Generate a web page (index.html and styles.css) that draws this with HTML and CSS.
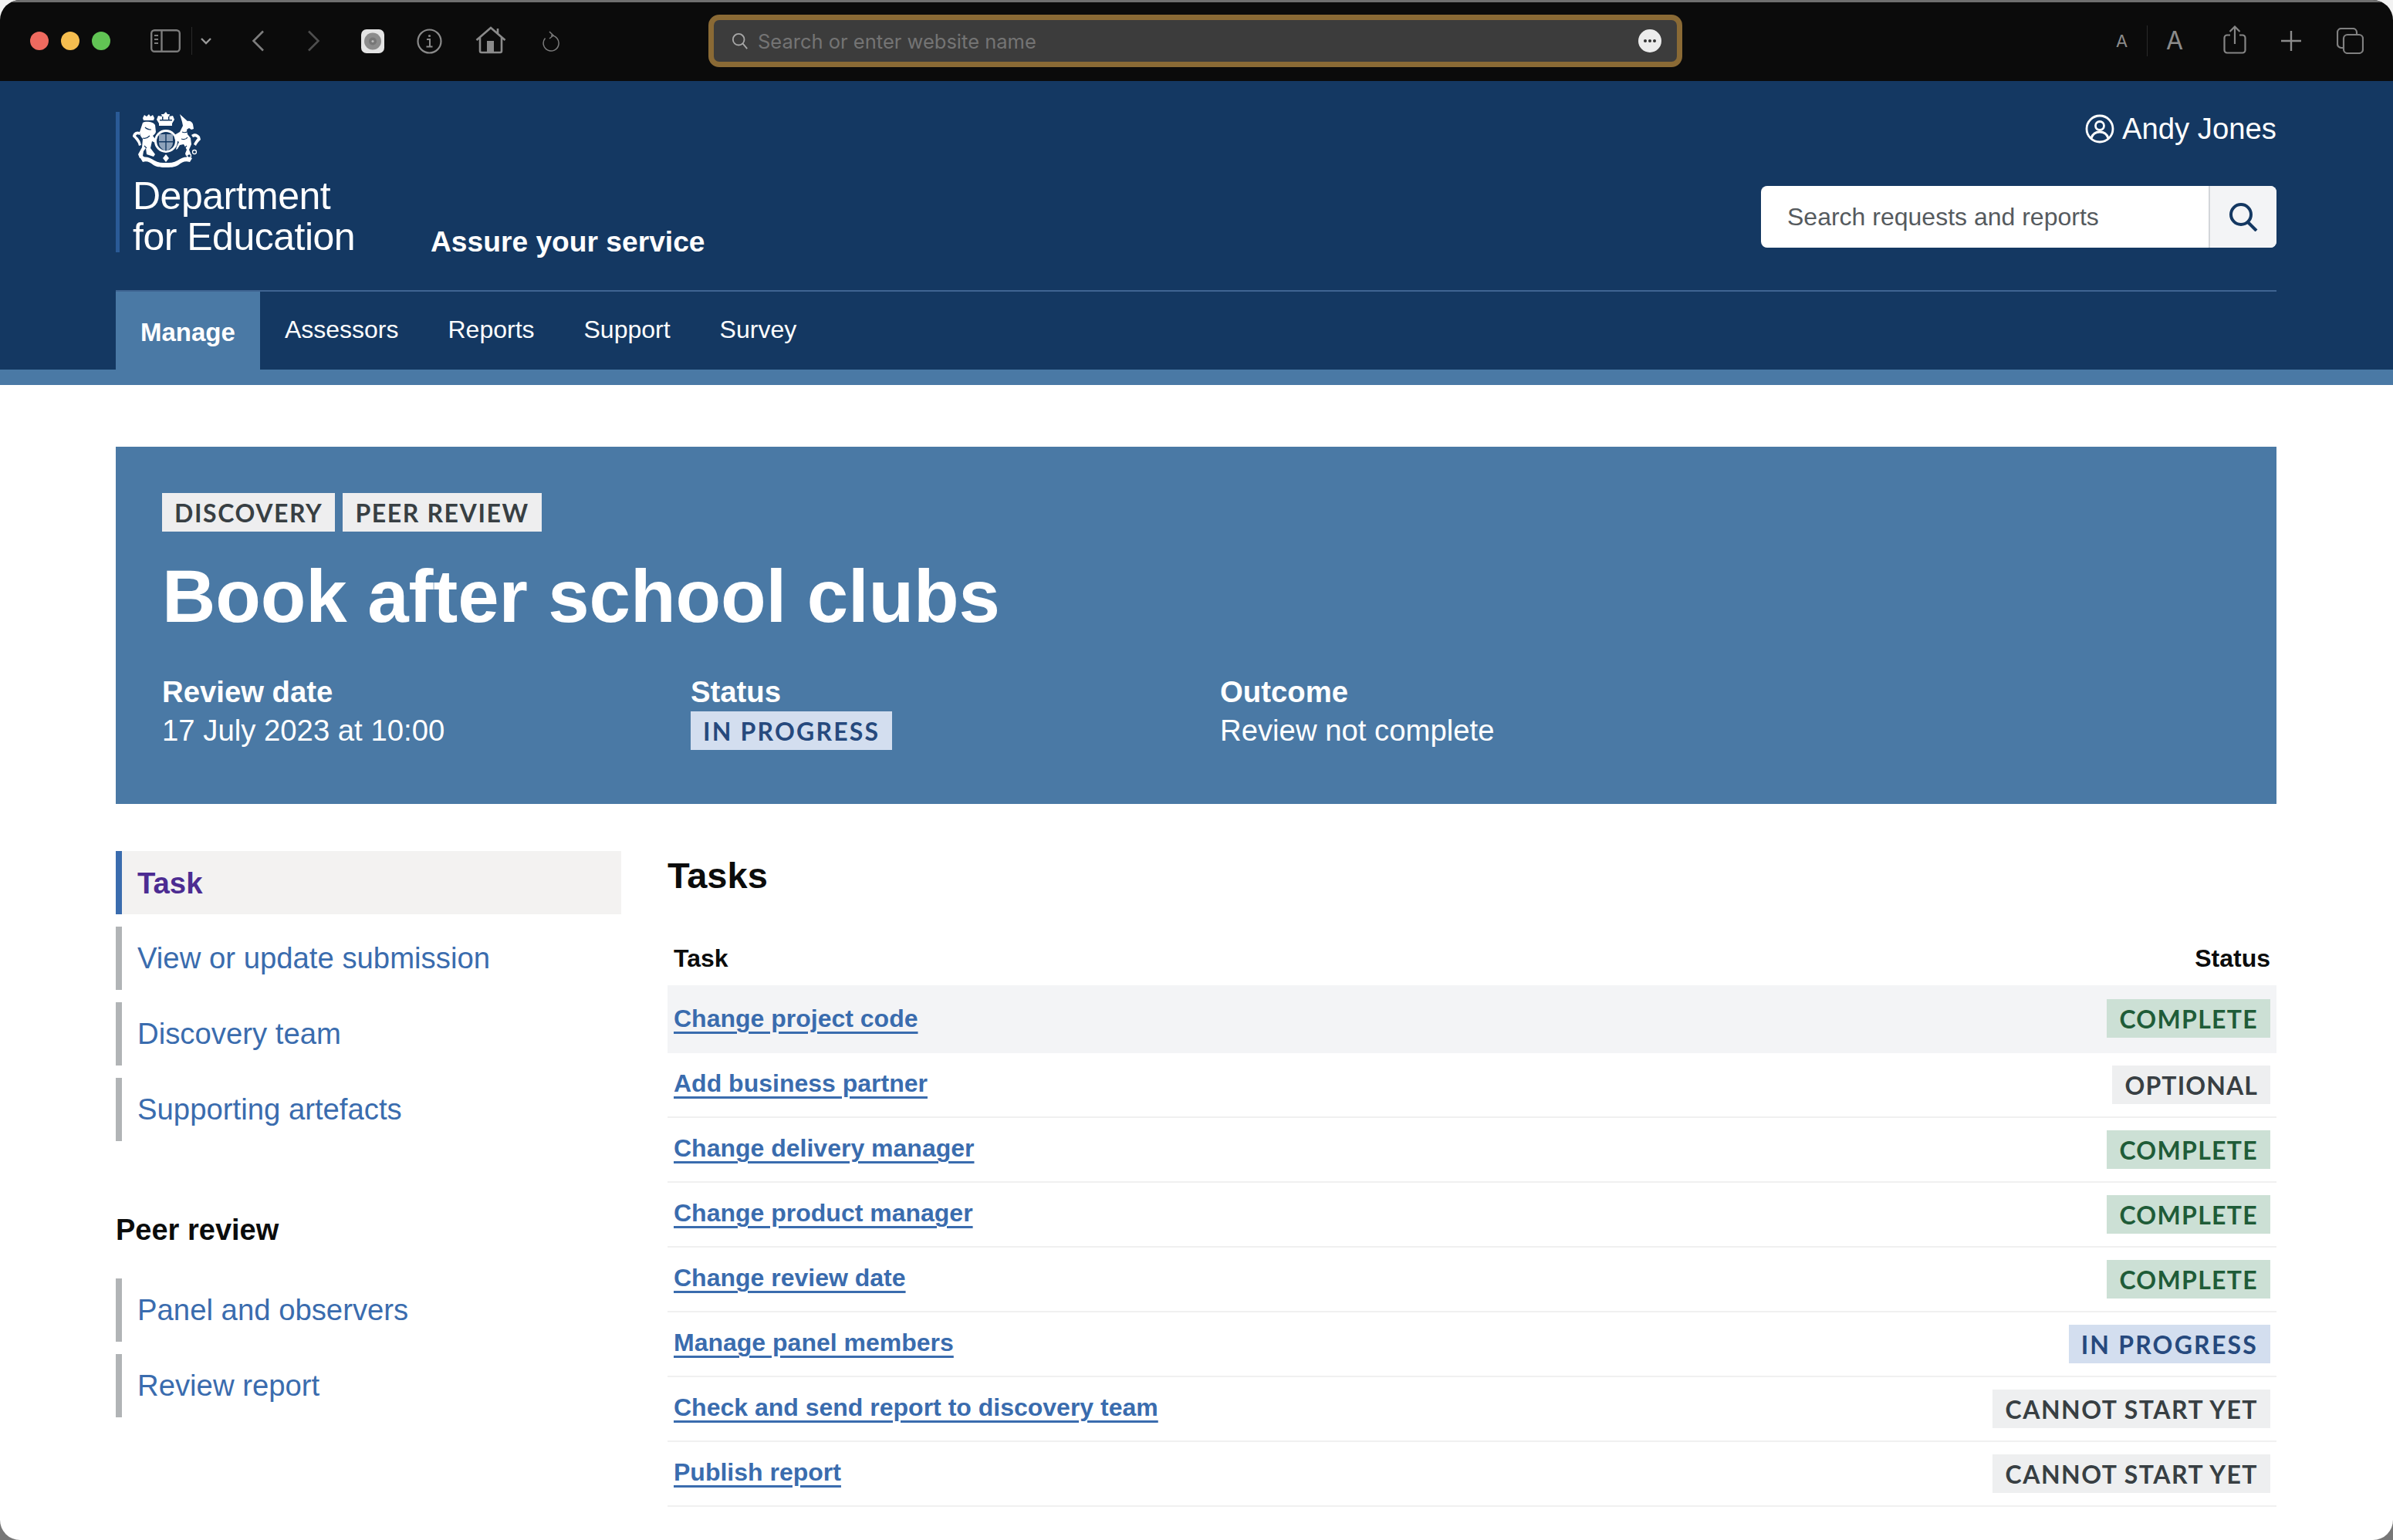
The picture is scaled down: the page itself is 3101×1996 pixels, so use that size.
FILE: index.html
```html
<!DOCTYPE html>
<html lang="en">
<head>
<meta charset="utf-8">
<title>Book after school clubs</title>
<link rel="stylesheet" href="styles.css">
</head>
<body>
<div class="window">
  <div class="toolbar">
    <span class="light red"></span><span class="light yellow"></span><span class="light green"></span>
    <svg class="i-sidebar" viewBox="0 0 39 30" fill="none" stroke="#7c7c7c" stroke-width="2.4"><rect x="1.2" y="1.2" width="36.6" height="27.6" rx="4"/><path d="M14.5 1v28"/><path d="M5 8h5M5 13h5M5 18h5" stroke-width="2"/></svg>
    <span class="tb-div d1"></span>
    <svg class="i-chev" viewBox="0 0 14 9" fill="none" stroke="#9a9a9a" stroke-width="2.4"><path d="M1 1l6 6 6-6"/></svg>
    <svg class="i-back" viewBox="0 0 17 28" fill="none" stroke="#7e7e7e" stroke-width="2.6"><path d="M15 1.5L2.5 14 15 26.5"/></svg>
    <svg class="i-fwd" viewBox="0 0 17 28" fill="none" stroke="#4e4e4e" stroke-width="2.6"><path d="M2 1.5L14.5 14 2 26.5"/></svg>
    <svg class="i-ext" viewBox="0 0 30 31"><rect width="30" height="31" rx="7" fill="#e4e4e4"/><circle cx="15" cy="15.5" r="11" fill="#8c8c8c"/><circle cx="15" cy="15.5" r="5" fill="#777"/><circle cx="15" cy="15.5" r="1.6" fill="#bbb"/></svg>
    <svg class="i-info" viewBox="0 0 33 33" fill="none" stroke="#8a8a8a" stroke-width="2.2"><circle cx="16.5" cy="16.5" r="15"/><path d="M13 14h4v9M12.5 23.500h8" stroke-width="2"/><circle cx="16.500" cy="9.500" r="1.600" fill="#8a8a8a" stroke="none"/></svg>
    <svg class="i-home" viewBox="0 0 40 36" fill="none" stroke="#8a8a8a" stroke-width="2.600"><path d="M1.500 18L20 2l18.500 16M29 9.500V3M6 14.500V32a2 2 0 0 0 2 2h24a2 2 0 0 0 2-2V14.500"/><rect x="15" y="19" width="9" height="15" fill="#8a8a8a" stroke="none"/></svg>
    <svg class="i-reload" viewBox="0 0 24 28" fill="none" stroke="#7c7c7c" stroke-width="1.500"><path d="M12 7A10 10 0 1 1 4.500 10.500"/><path d="M10 2l5 5-5 4"/></svg>
    <div class="urlbar">
      <svg class="i-urlsearch" viewBox="0 0 24 24" fill="none" stroke="#a8a8a8" stroke-width="2"><circle cx="10" cy="10" r="8"/><path d="M16 16l6 7"/></svg>
      <span class="url-text">Search or enter website name</span>
      <span class="url-more"><i></i><i></i><i></i></span>
    </div>
    <span class="a-small">A</span>
    <span class="tb-div d2"></span>
    <span class="a-big">A</span>
    <svg class="i-share" viewBox="0 0 30 37" fill="none" stroke="#858585" stroke-width="2.200"><path d="M9 12.500H5a3.500 3.500 0 0 0-3.500 3.500v16A3.500 3.500 0 0 0 5 35.500h20a3.500 3.500 0 0 0 3.500-3.500V16a3.500 3.500 0 0 0-3.500-3.500h-4"/><path d="M15 24V2M8.500 8L15 1.500 21.500 8"/></svg>
    <svg class="i-plus" viewBox="0 0 28 28" fill="none" stroke="#8c8c8c" stroke-width="2.400"><path d="M14 1v26M1 14h26"/></svg>
    <svg class="i-tabs" viewBox="0 0 35 34" fill="none" stroke="#808080" stroke-width="2.200"><path d="M8 26H6a5 5 0 0 1-5-5V6a5 5 0 0 1 5-5h15a5 5 0 0 1 5 5v2"/><rect x="9" y="9" width="25" height="24" rx="5"/></svg>
  </div>

  <header class="site-header">
    <div class="header-inner">
      <div class="header-top">
        <div class="logo">
          <svg class="crest" viewBox="0 0 88 72" fill="#fff">
            <path d="M43 0l2 3 3 0-1 3 5-1 2 5-3 5v3H34v-3l-3-5 2-5 5 1-1-3 3 0z"/>
            <path d="M35 10h16v1.500H35zM38 6h1.500v4H38zM46 6h1.500v4H46z" fill="#143862"/>
            <circle cx="43" cy="38" r="15"/>
            <circle cx="43" cy="38" r="12" fill="#143862"/>
            <path d="M34 29h18v11c0 6-5 9-9 11-4-2-9-5-9-11z" fill="#8fa3bb"/>
            <path d="M42.300 29h1.400v21h-1.400zM34 38h18v1.400H34z" fill="#143862"/>
            <path d="M13 8l2-4 3 2 3-3 2 3 3-2 2 4-1 3H14z"/>
            <path d="M13 14c3-2 13-2 16 3l1 9c-1 3-3 4-4 5l4 5-1 4-4-2-2 9 6 8-2 3-9-3-1-8-3 4-1 6 4 3H9l-2-5 5-9 1-11c-3-3-4-6-4-9z"/>
            <path d="M16 20c2 2 5 3 8 3M13 34c3 1 6 0 9-3M15 44l3 3" fill="none" stroke="#143862" stroke-width="1.200"/>
            <path d="M9 26c-5-2-9 2-9 6 4 4 7 7 8 12l3-1c-1-6-4-9-7-12 1-2 3-2 5-1z"/>
            <path d="M61 3l10 9c3-1 6 1 7 4l1 6-3 1-3-2-3 2 1 6 4 5 1 8-3 7 2 5-6 3-1-3 2-5-4-7-5 1-3 5-2 1 1-4 3-6-5-3-1-6 7-4 4-8-1-5z"/>
            <path d="M64 26c2 1 5 1 8-1M63 35c3 1 6 1 8-2M70 44l-3 3" fill="none" stroke="#143862" stroke-width="1.200"/>
            <path d="M76 30c4-3 8-2 11 2l1 4c-3 3-5 5-6 8l-3-2c1-3 3-5 5-8-2-2-4-2-6-1z"/>
            <circle cx="73" cy="57" r="2.500" fill="none" stroke="#fff" stroke-width="1.300"/><circle cx="80" cy="52" r="2.500" fill="none" stroke="#fff" stroke-width="1.300"/>
            <path d="M10 60c6-3 12-1 18 3 5 3 10 3 15 3s10 0 15-3c6-4 12-6 19-3l-3 5c-6-2-10 0-15 4-5 3-11 3-16 3s-11 0-16-3c-5-4-9-6-14-4z"/>
            <path d="M43 55l4 5-4 5-4-5z"/>
          </svg>
          <div class="logo-text">Department<br>for Education</div>
        </div>
        <div class="service">Assure your service</div>
        <div class="header-right">
          <div class="user">
            <svg class="i-user" viewBox="0 0 38 38" fill="none" stroke="#fff" stroke-width="2.800"><circle cx="19" cy="19" r="17"/><circle cx="19" cy="15" r="5.500"/><path d="M8 31c2-6 6-8 11-8s9 2 11 8"/></svg>
            <span>Andy Jones</span>
          </div>
          <div class="search">
            <span class="search-text">Search requests and reports</span>
            <span class="search-btn"><svg class="i-search" viewBox="0 0 38 38" fill="none" stroke="#143862" stroke-width="4"><circle cx="16" cy="16" r="13"/><path d="M25 26l11 11"/></svg></span>
          </div>
        </div>
      </div>
      <nav class="nav">
        <a class="nav-item active">Manage</a>
        <a class="nav-item">Assessors</a>
        <a class="nav-item">Reports</a>
        <a class="nav-item">Support</a>
        <a class="nav-item">Survey</a>
      </nav>
    </div>
  </header>

  <main class="content">
    <section class="hero">
      <div class="hero-tags">
        <span class="tag tag-grey">DISCOVERY</span>
        <span class="tag tag-grey">PEER REVIEW</span>
      </div>
      <h1 class="hero-title">Book after school clubs</h1>
      <div class="hero-meta">
        <div>
          <div class="meta-label">Review date</div>
          <div class="meta-value">17 July 2023 at 10:00</div>
        </div>
        <div>
          <div class="meta-label">Status</div>
          <span class="tag tag-blue">IN PROGRESS</span>
        </div>
        <div>
          <div class="meta-label">Outcome</div>
          <div class="meta-value">Review not complete</div>
        </div>
      </div>
    </section>

    <div class="columns">
      <aside class="side">
        <ul class="side-list">
          <li class="side-item current">Task</li>
          <li class="side-item">View or update submission</li>
          <li class="side-item">Discovery team</li>
          <li class="side-item">Supporting artefacts</li>
        </ul>
        <h2 class="side-heading">Peer review</h2>
        <ul class="side-list">
          <li class="side-item">Panel and observers</li>
          <li class="side-item">Review report</li>
        </ul>
      </aside>
      <section class="tasks">
        <h2 class="tasks-title">Tasks</h2>
        <div class="task-head"><span>Task</span><span>Status</span></div>
        <div class="task-row hl"><a class="task-link">Change project code</a><span class="tag tag-green">COMPLETE</span></div>
        <div class="task-row"><a class="task-link">Add business partner</a><span class="tag tag-optional">OPTIONAL</span></div>
        <div class="task-row"><a class="task-link">Change delivery manager</a><span class="tag tag-green">COMPLETE</span></div>
        <div class="task-row"><a class="task-link">Change product manager</a><span class="tag tag-green">COMPLETE</span></div>
        <div class="task-row"><a class="task-link">Change review date</a><span class="tag tag-green">COMPLETE</span></div>
        <div class="task-row"><a class="task-link">Manage panel members</a><span class="tag tag-blue">IN PROGRESS</span></div>
        <div class="task-row"><a class="task-link">Check and send report to discovery team</a><span class="tag tag-grey2">CANNOT START YET</span></div>
        <div class="task-row"><a class="task-link">Publish report</a><span class="tag tag-grey2">CANNOT START YET</span></div>
      </section>
    </div>
  </main>
</div>
</body>
</html>
```

FILE: styles.css
```css
* { box-sizing: border-box; }
html, body { margin: 0; padding: 0; }
body {
  width: 3101px;
  height: 1996px;
  overflow: hidden;
  font-family: "Liberation Sans", Arial, sans-serif;
  background: linear-gradient(#f2f2f2 0 50%, #777 50% 100%);
}
.window {
  width: 3101px;
  height: 1996px;
  background: #fff;
  border-radius: 26px;
  overflow: hidden;
}

/* browser toolbar */
.toolbar {
  height: 105px;
  background: #0b0b0b;
  border-top: 3px solid #6f6f6f;
  display: flex;
  align-items: center;
  padding-bottom: 2px;
  flex-shrink: 0;
}
.toolbar > * { flex: none; }
.light { width: 24px; height: 24px; border-radius: 50%; margin-left: 16px; }
.light.red { background: #ee6a5f; margin-left: 39px; }
.light.yellow { background: #f5bd4f; }
.light.green { background: #61c454; }
.i-sidebar { width: 39px; height: 30px; margin-left: 52px; }
.tb-div { width: 1px; background: #2a2a2a; }
.tb-div.d1 { height: 36px; margin-left: 14px; }
.i-chev { width: 14px; height: 9px; margin-left: 11px; }
.i-back { width: 17px; height: 28px; margin-left: 52px; }
.i-fwd { width: 17px; height: 28px; margin-left: 55px; }
.i-ext { width: 30px; height: 31px; margin-left: 53px; }
.i-info { width: 33px; height: 33px; margin-left: 42px; }
.i-home { width: 40px; height: 36px; margin-left: 43px; margin-top: -3px; }
.i-reload { width: 24px; height: 28px; margin-left: 46px; }
.urlbar {
  width: 1262px;
  height: 68px;
  margin-left: 192px;
  background: #3c3c3c;
  border: 7px solid #8a6a35;
  border-radius: 14px;
  display: flex;
  align-items: center;
  padding: 0 20px 0 23px;
}
.i-urlsearch { width: 22px; height: 24px; flex: none; }
.url-text {
  margin-left: 12px;
  font-family: Inter, "Liberation Sans", sans-serif;
  font-size: 25.5px;
  color: #747474;
}
.url-more {
  margin-left: auto;
  width: 30px;
  height: 30px;
  border-radius: 50%;
  background: #ececec;
  display: flex;
  align-items: center;
  justify-content: center;
  gap: 2px;
}
.url-more i { width: 4px; height: 4px; border-radius: 50%; background: #333; }
.a-small, .a-big {
  font-family: Inter, "Liberation Sans", sans-serif;
  color: #8b8b8b;
  line-height: 1;
}
.a-small { font-size: 22px; margin-left: 562px; width: 15px; text-align: center; }
.tb-div.d2 { height: 40px; margin-left: 25px; }
.a-big { font-size: 32px; margin-left: 24px; width: 21px; text-align: center; }
.i-share { width: 30px; height: 37px; margin-left: 53px; margin-top: -3px; }
.i-plus { width: 28px; height: 28px; margin-left: 44px; }
.i-tabs { width: 35px; height: 34px; margin-left: 45px; }

/* site header */
.site-header {
  background: #143862;
  border-bottom: 20px solid #4a79a5;
  height: 394px;
  padding: 0 151px 0 150px;
}
.header-inner { height: 100%; display: flex; flex-direction: column; }
.header-top {
  height: 273px;
  border-bottom: 2px solid #3f6492;
  display: flex;
  flex: none;
}
.logo {
  margin-top: 40px;
  height: 182px;
  border-left: 5px solid #2a5a96;
  padding-left: 17px;
  width: 408px;
  flex: none;
}
.crest { display: block; width: 88px; height: 72px; }
.logo-text {
  margin-top: 11px;
  font-size: 50px;
  line-height: 53px;
  color: #fff;
  letter-spacing: -0.5px;
  white-space: nowrap;
}
.service {
  align-self: flex-end;
  margin-bottom: 40px;
  font-size: 37.2px;
  line-height: 46px;
  font-weight: 700;
  color: #fff;
}
.header-right {
  margin-left: auto;
  display: flex;
  flex-direction: column;
  align-items: flex-end;
}
.user {
  margin-top: 40px;
  height: 44px;
  display: flex;
  align-items: center;
  gap: 10px;
  color: #fff;
  font-size: 38.3px;
}
.i-user { width: 38px; height: 38px; }
.search {
  margin-top: 52px;
  width: 668px;
  height: 80px;
  background: #fff;
  border-radius: 8px;
  overflow: hidden;
  display: flex;
  align-items: center;
}
.search-text { padding-left: 34px; font-size: 32px; color: #555a5e; }
.search-btn {
  margin-left: auto;
  width: 88px;
  height: 80px;
  background: #f3f4f6;
  border-left: 2px solid #d3d6da;
  display: flex;
  align-items: center;
  justify-content: center;
}
.i-search { width: 38px; height: 38px; }
.nav { display: flex; height: 101px; }
.nav-item {
  padding: 0 32px 2px;
  display: flex;
  align-items: center;
  color: #fff;
  font-size: 32px;
}
.nav-item.active {
  background: #4a79a5;
  font-size: 33px;
  font-weight: 700;
  padding-top: 4px;
  padding-bottom: 0;
}

/* content */
.content { padding: 80px 151px 0 150px; }
.hero {
  height: 463px;
  background: #4a79a5;
  padding: 60px 60px 0;
  color: #fff;
}
.hero-tags { display: flex; gap: 10px; }
.hero-tags .tag { letter-spacing: 1.6px; }
.tag {
  display: inline-flex;
  align-items: center;
  height: 50px;
  padding: 0 16px;
  font-family: Lato, "Liberation Sans", sans-serif;
  font-weight: 700;
  font-size: 32px;
  letter-spacing: 1.5px;
  white-space: nowrap;
}
.tag-grey { background: #eeeeef; color: #383f43; }
.tag-grey2 { background: #eeeff0; color: #383f43; }
.tag-optional { background: #eeeff0; color: #383f43; letter-spacing: 1.1px; }
.tag-blue { background: #d3deef; color: #26497d; letter-spacing: 2.2px; }
.tag-green { background: #cce0d5; color: #1f5c38; letter-spacing: 1.3px; }
.hero-title {
  margin: 29px 0 0;
  font-size: 96px;
  line-height: 110px;
  font-weight: 700;
  letter-spacing: -0.1px;
}
.hero-meta {
  margin-top: 44px;
  display: grid;
  grid-template-columns: 685px 686px 1fr;
}
.meta-label { font-size: 38.3px; line-height: 50px; font-weight: 700; }
.meta-value { font-size: 38.3px; line-height: 50px; }
.columns { display: flex; gap: 60px; margin-top: 61px; }
.side { width: 655px; flex: none; }
.side-list { list-style: none; margin: 0; padding: 0; display: flex; flex-direction: column; gap: 16px; }
.side-item {
  height: 82px;
  border-left: 8px solid #b1b4b6;
  padding-left: 20px;
  display: flex;
  align-items: center;
  font-size: 38.3px;
  color: #3a6cae;
}
.side-item.current {
  background: #f3f2f1;
  border-left-color: #3a6cae;
  color: #4c2c92;
  font-weight: 700;
  padding-top: 2px;
}
.side-heading {
  margin: 0;
  height: 178px;
  display: flex;
  align-items: center;
  padding-top: 52px;
  font-size: 38px;
  color: #0b0c0c;
}
.tasks { flex: 1; min-width: 0; }
.tasks-title {
  margin: 2px 0 0;
  font-size: 47px;
  line-height: 60px;
  color: #0b0c0c;
  font-weight: 700;
}
.task-head {
  margin-top: 48px;
  height: 64px;
  padding: 0 8px 6px;
  display: flex;
  justify-content: space-between;
  align-items: center;
  font-size: 32px;
  font-weight: 700;
  color: #0b0c0c;
}
.task-row {
  height: 84px;
  padding: 0 8px;
  display: flex;
  justify-content: space-between;
  align-items: center;
  border-bottom: 2px solid #f0f0f0;
}
.task-row.hl { height: 88px; background: #f3f4f6; border-bottom-color: #f3f4f6; }
.task-link {
  font-size: 32px;
  font-weight: 700;
  color: #3a6cae;
  text-decoration: underline;
  text-decoration-thickness: 3px;
  text-underline-offset: 6px;
  margin-bottom: 3px;
}
.hl .task-link { margin-bottom: 0; }
```
